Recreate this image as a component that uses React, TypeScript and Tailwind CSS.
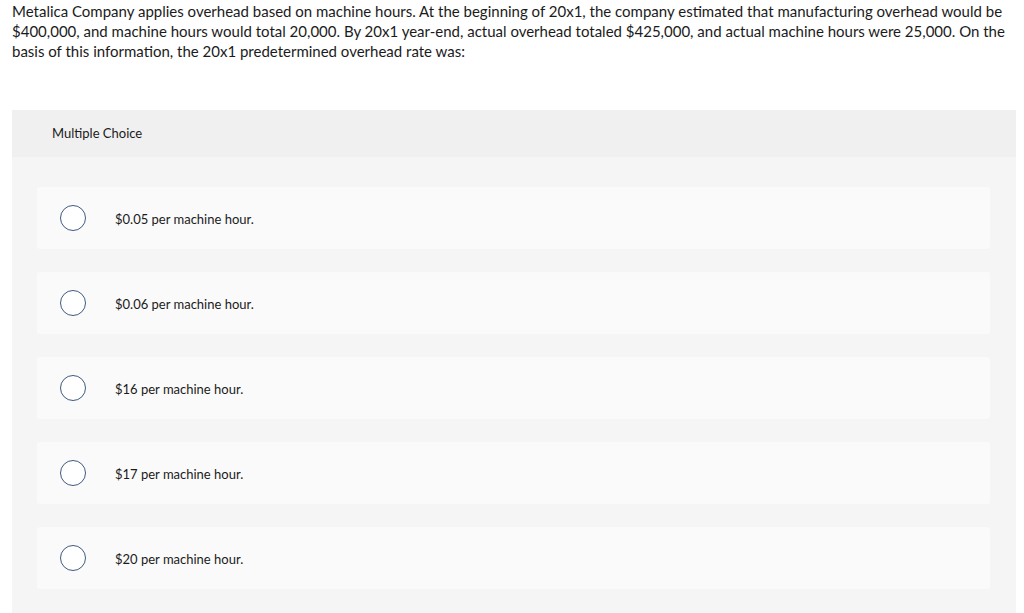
import React from "react";

const options = [
  "$0.05 per machine hour.",
  "$0.06 per machine hour.",
  "$16 per machine hour.",
  "$17 per machine hour.",
  "$20 per machine hour.",
];

const questionLines = [
  "Metalica Company applies overhead based on machine hours. At the beginning of 20x1, the company estimated that manufacturing overhead would be",
  "$400,000, and machine hours would total 20,000. By 20x1 year-end, actual overhead totaled $425,000, and actual machine hours were 25,000. On the",
  "basis of this information, the 20x1 predetermined overhead rate was:",
];

export default function App() {
  return (
    <div className="min-h-screen bg-white text-[#1b1b1b] font-['Lato','Liberation_Sans',sans-serif]">
      <div className="px-3 pt-[1px] text-[15px] leading-[20px]">
        {questionLines.map((line) => (
          <div key={line} className="whitespace-nowrap">
            {line}
          </div>
        ))}
      </div>

      <div className="ml-3 mr-2 mt-[49px] bg-[#f5f5f5]">
        <div className="h-[47px] bg-[#f0f0f0] pl-10 flex items-center text-[13px]">
          Multiple Choice
        </div>
        <div className="pt-[30px] pl-[25px] pr-[26px] pb-6 flex flex-col gap-[23px]">
          {options.map((opt) => (
            <div
              key={opt}
              className="h-[62px] bg-[#fafafa] rounded-[3px] flex items-center"
            >
              <span className="ml-[23px] w-[26px] h-[26px] rounded-full border border-[#3d5a80] bg-white" />
              <span className="ml-[29px] pt-[3px] text-[13px]">{opt}</span>
            </div>
          ))}
        </div>
      </div>
    </div>
  );
}
